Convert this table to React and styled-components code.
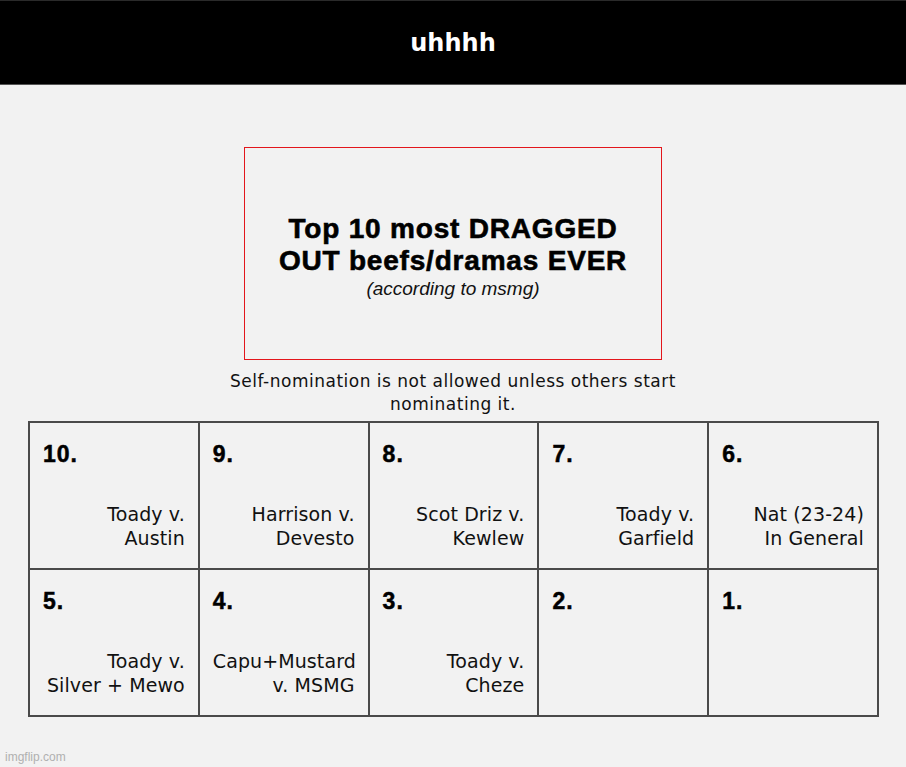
import styled, { createGlobalStyle } from "styled-components";

const Global = createGlobalStyle`
  html, body { margin: 0; padding: 0; background: #f2f2f2; }
  body { width: 906px; height: 767px; overflow: hidden; }
`;

const Page = styled.div`
  position: relative;
  width: 906px;
  height: 767px;
  background: #f2f2f2;
  display: flex;
  flex-direction: column;
  align-items: center;
`;

const Header = styled.div`
  width: 100%;
  height: 85px;
  background: #000;
  border-top: 1px solid #2a2a2a;
  border-bottom: 1px solid #555;
  display: flex;
  align-items: center;
  justify-content: center;
  box-sizing: border-box;
  color: #fff;
  font-family: "DejaVu Sans", sans-serif;
  font-weight: bold;
  font-size: 24px;
`;

const TitleBox = styled.div`
  margin-top: 62px;
  width: 418px;
  height: 213px;
  box-sizing: border-box;
  border: 1px solid #e3161c;
  display: flex;
  flex-direction: column;
  align-items: center;
  justify-content: center;
  text-align: center;
  padding-top: 6px;
`;

const BigTitle = styled.div`
  font-family: "Liberation Sans", Arial, sans-serif;
  font-weight: bold;
  font-size: 28px;
  line-height: 32px;
  color: #000;
  letter-spacing: 0.8px;
  -webkit-text-stroke: 0.6px #000;
`;

const SubTitle = styled.div`
  font-family: "Liberation Sans", Arial, sans-serif;
  font-style: italic;
  font-size: 19px;
  line-height: 24px;
  color: #111;
`;

const Note = styled.div`
  width: 490px;
  margin-top: 10px;
  text-align: center;
  font-family: "DejaVu Sans", sans-serif;
  font-size: 17px;
  letter-spacing: 0.5px;
  line-height: 23px;
  color: #111;
`;

const Grid = styled.div`
  margin-top: 5px;
  margin-left: 1px;
  display: grid;
  grid-template-columns: repeat(5, 169.8px);
  grid-auto-rows: 147px;
  border-left: 2px solid #4a4a4a;
  border-top: 2px solid #4a4a4a;
`;

const Cell = styled.div`
  border-right: 2px solid #4a4a4a;
  border-bottom: 2px solid #4a4a4a;
  box-sizing: border-box;
  display: flex;
  flex-direction: column;
  justify-content: space-between;
  padding: 18px 13px 18px 13px;
`;

const Rank = styled.div`
  font-family: "Liberation Sans", Arial, sans-serif;
  font-weight: bold;
  font-size: 23px;
  line-height: 26px;
  letter-spacing: 1px;
  -webkit-text-stroke: 0.5px #000;
  color: #000;
`;

const Entry = styled.div`
  font-family: "DejaVu Sans", sans-serif;
  font-size: 19px;
  letter-spacing: 0.1px;
  line-height: 24px;
  text-align: right;
  color: #111;
`;

const Watermark = styled.div`
  position: absolute;
  left: 5px;
  bottom: 3px;
  font-family: "Liberation Sans", Arial, sans-serif;
  font-size: 12px;
  color: #b0b0b0;
`;

const entries = [
  ["10.", "Toady v.", "Austin"],
  ["9.", "Harrison v.", "Devesto"],
  ["8.", "Scot Driz v.", "Kewlew"],
  ["7.", "Toady v.", "Garfield"],
  ["6.", "Nat (23-24)", "In General"],
  ["5.", "Toady v.", "Silver + Mewo"],
  ["4.", "Capu+Mustard", "v. MSMG"],
  ["3.", "Toady v.", "Cheze"],
  ["2.", null, null],
  ["1.", null, null],
];

export default function App() {
  return (
    <Page>
      <Global />
      <Header>uhhhh</Header>
      <TitleBox>
        <BigTitle>
          Top 10 most DRAGGED
          <br />
          OUT beefs/dramas EVER
        </BigTitle>
        <SubTitle>(according to msmg)</SubTitle>
      </TitleBox>
      <Note>Self-nomination is not allowed unless others start nominating it.</Note>
      <Grid>
        {entries.map(([n, a, b]) => (
          <Cell key={n}>
            <Rank>{n}</Rank>
            {a && (
              <Entry>
                {a}
                <br />
                {b}
              </Entry>
            )}
          </Cell>
        ))}
      </Grid>
      <Watermark>imgflip.com</Watermark>
    </Page>
  );
}
